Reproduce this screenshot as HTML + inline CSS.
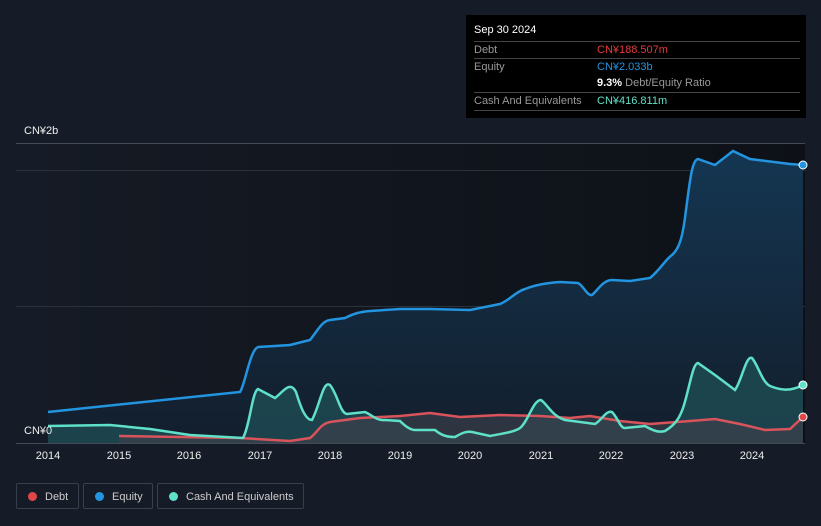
<!DOCTYPE html>
<html><head><style>
body{margin:0;width:821px;height:526px;background:#161c27;font-family:"Liberation Sans",sans-serif;overflow:hidden;position:relative}
.tt{position:absolute;left:466px;top:15px;width:340px;height:103px;background:#000;color:#fff;font-size:11px}
.tt .r{position:absolute;left:8px;right:6px;border-top:1px solid #444;height:17px;line-height:17px}
.lab{color:#999}
.v{position:absolute;left:123px}
.leg{position:absolute;top:483px;height:26px;border:1px solid #3a404b;border-radius:2px;color:#ccc;font-size:11px;line-height:26px;box-sizing:border-box}
.leg i{position:absolute;left:11px;top:8px;width:9px;height:9px;border-radius:50%}
.ax{position:absolute;top:450px;color:#eee;font-size:11px;width:40px;text-align:center}
</style></head><body>
<svg width="821" height="526" style="position:absolute;left:0;top:0">
<defs>
<linearGradient id="bg" x1="0" x2="1"><stop offset="0" stop-color="#151a24"/><stop offset="1" stop-color="#0d1117"/></linearGradient>
<linearGradient id="eq" x1="0" y1="0" x2="0" y2="1"><stop offset="0" stop-color="#143652"/><stop offset="1" stop-color="#131e2c"/></linearGradient>
</defs>
<rect x="48" y="143" width="757" height="300" fill="url(#bg)"/>
<line x1="16" y1="143.5" x2="805" y2="143.5" stroke="#444a55"/>
<line x1="16" y1="170.5" x2="805" y2="170.5" stroke="#2b313b"/>
<line x1="16" y1="306.5" x2="805" y2="306.5" stroke="#2b313b"/>
<path d="M48,412 L240,392 C245,385 250,350 258,347 L275,346 L290,345 L310,340 C318,330 322,321 330,320 L345,318 C355,313 360,312 370,311 L400,309 L430,309 L470,310 L500,304 C510,300 515,292 525,289 C535,285 545,283 560,282 L578,283 C583,285 587,296 592,295 C598,290 603,280 612,280 L630,281 L650,278 C660,270 665,260 672,255 C680,248 683,235 686,210 C690,180 692,160 698,159 L715,165 L733,151 L750,159 L790,164 L803,165 L803,443 L48,443 Z" fill="url(#eq)"/>
<path d="M48,426 L110,425 L150,429 L190,435 L243,438 C250,425 252,392 258,389 L275,398 C283,392 290,380 296,392 C300,405 305,420 312,420 C320,405 323,380 330,385 C338,395 340,413 347,414 L365,412 C372,415 377,421 385,420 L400,421 C405,426 410,430 415,430 L435,430 C442,436 448,437 455,437 C462,433 466,431 472,432 L490,436 C500,434 515,432 520,428 C528,422 533,400 541,400 C548,405 552,416 565,420 L595,424 C602,420 606,410 612,412 C618,418 620,428 625,428 L645,426 C652,430 658,433 665,431 C675,425 680,418 684,405 C690,385 693,363 698,363 L715,375 L735,390 C742,380 746,355 752,358 C758,365 762,382 770,386 C780,390 790,392 803,385 L803,443 L48,443 Z" fill="#1e4a52" fill-opacity="0.85"/>
<path d="M119,436 L240,438 L290,441 L310,438 C318,432 320,424 330,422 L360,418 L400,416 L430,413 L460,417 L500,415 L540,416 L570,418 L590,416 L620,421 L650,424 L690,421 L715,419 L740,424 L765,430 L790,429 L803,417 L803,443 L119,443 Z" fill="#3a3f4a" fill-opacity="0.7"/>
<path d="M48,412 L240,392 C245,385 250,350 258,347 L275,346 L290,345 L310,340 C318,330 322,321 330,320 L345,318 C355,313 360,312 370,311 L400,309 L430,309 L470,310 L500,304 C510,300 515,292 525,289 C535,285 545,283 560,282 L578,283 C583,285 587,296 592,295 C598,290 603,280 612,280 L630,281 L650,278 C660,270 665,260 672,255 C680,248 683,235 686,210 C690,180 692,160 698,159 L715,165 L733,151 L750,159 L790,164 L803,165" fill="none" stroke="#2394e0" stroke-width="2.5"/>
<path d="M119,436 L240,438 L290,441 L310,438 C318,432 320,424 330,422 L360,418 L400,416 L430,413 L460,417 L500,415 L540,416 L570,418 L590,416 L620,421 L650,424 L690,421 L715,419 L740,424 L765,430 L790,429 L803,417" fill="none" stroke="#d9535b" stroke-width="2.5"/>
<path d="M48,426 L110,425 L150,429 L190,435 L243,438 C250,425 252,392 258,389 L275,398 C283,392 290,380 296,392 C300,405 305,420 312,420 C320,405 323,380 330,385 C338,395 340,413 347,414 L365,412 C372,415 377,421 385,420 L400,421 C405,426 410,430 415,430 L435,430 C442,436 448,437 455,437 C462,433 466,431 472,432 L490,436 C500,434 515,432 520,428 C528,422 533,400 541,400 C548,405 552,416 565,420 L595,424 C602,420 606,410 612,412 C618,418 620,428 625,428 L645,426 C652,430 658,433 665,431 C675,425 680,418 684,405 C690,385 693,363 698,363 L715,375 L735,390 C742,380 746,355 752,358 C758,365 762,382 770,386 C780,390 790,392 803,385" fill="none" stroke="#5fe0c8" stroke-width="2.5"/>
<line x1="16" y1="443.5" x2="805" y2="443.5" stroke="#444a55"/>
<circle cx="803" cy="165" r="4" fill="#2394e0" stroke="#fff" stroke-width="1"/>
<circle cx="803" cy="385" r="4" fill="#5fe0c8" stroke="#fff" stroke-width="1"/>
<circle cx="803" cy="417" r="4" fill="#e04848" stroke="#fff" stroke-width="1"/>
</svg>
<div style="position:absolute;left:24px;top:125px;color:#eee;font-size:11px">CN¥2b</div>
<div style="position:absolute;left:24px;top:425px;color:#eee;font-size:11px">CN¥0</div>
<div class="ax" style="left:28px">2014</div><div class="ax" style="left:99px">2015</div><div class="ax" style="left:169px">2016</div><div class="ax" style="left:240px">2017</div><div class="ax" style="left:310px">2018</div><div class="ax" style="left:380px">2019</div><div class="ax" style="left:450px">2020</div><div class="ax" style="left:521px">2021</div><div class="ax" style="left:591px">2022</div><div class="ax" style="left:662px">2023</div><div class="ax" style="left:732px">2024</div>
<div class="tt">
<div style="position:absolute;left:8px;top:9px;font-size:11px">Sep 30 2024</div>
<div class="r" style="top:26px"><span class="lab">Debt</span><span class="v" style="color:#e5393c">CN¥188.507m</span></div>
<div class="r" style="top:43px"><span class="lab">Equity</span><span class="v" style="color:#2394e0">CN¥2.033b</span></div>
<div class="r" style="top:60px;border:0"><span class="v"><b>9.3%</b> <span class="lab">Debt/Equity Ratio</span></span></div>
<div class="r" style="top:77px"><span class="lab">Cash And Equivalents</span><span class="v" style="color:#5fe0c8">CN¥416.811m</span></div>
<div class="r" style="top:95px;height:0"></div>
</div>
<div class="leg" style="left:16px;width:63px"><i style="background:#e04848"></i><span style="margin-left:28px">Debt</span></div>
<div class="leg" style="left:83px;width:70px"><i style="background:#2394e0"></i><span style="margin-left:28px">Equity</span></div>
<div class="leg" style="left:157px;width:147px"><i style="background:#5fe0c8"></i><span style="margin-left:28px">Cash And Equivalents</span></div>
</body></html>
